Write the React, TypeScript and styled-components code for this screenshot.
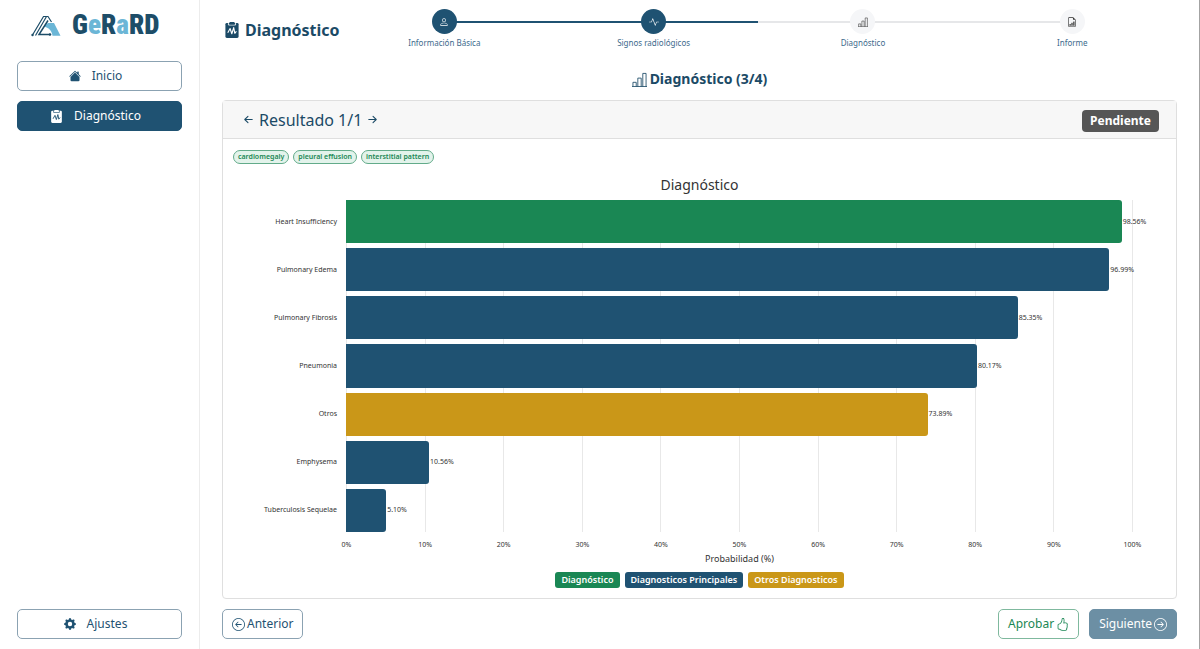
import React from "react";
import styled, { createGlobalStyle } from "styled-components";
import {
  BsActivity,
  BsArrowLeftCircle,
  BsArrowLeftShort,
  BsArrowRightCircle,
  BsArrowRightShort,
  BsFileEarmarkBarGraph,
  BsGearFill,
  BsHandThumbsUp,
  BsHouseFill,
  BsPerson,
} from "react-icons/bs";

const navy = "#1f5272";
const ink = "#1b4a66";
const green = "#1a8754";
const amber = "#ca9718";

const GlobalStyle = createGlobalStyle`
  *, *::before, *::after { box-sizing: border-box; }
  body {
    margin: 0;
    background: #fff;
    color: ${ink};
    font-family: "Noto Sans", "Open Sans", sans-serif;
    font-size: 12px;
    line-height: 16px;
  }
  h1, h2, h3, p, ul, ol { margin: 0; padding: 0; }
  ul, ol { list-style: none; }
  button { font: inherit; cursor: pointer; }
  svg { flex: none; }
`;

const Page = styled.div`
  display: flex;
  min-height: 100vh;
  border-right: 1px solid #a3a3a3;
`;

const Sidebar = styled.aside`
  display: flex;
  flex-direction: column;
  flex: 0 0 200px;
  padding: 10px 17px;
  border-right: 1px solid #ececec;
`;

const Logo = styled.a`
  display: flex;
  align-items: center;
  gap: 11px;
  height: 30px;
  margin: 0 0 21px 14px;
  color: #1d4d68;
  text-decoration: none;
`;

const Wordmark = styled.span`
  font-family: "Roboto Condensed", Roboto, sans-serif;
  font-size: 27px;
  line-height: 30px;
  font-weight: 900;
`;

const LightLetter = styled.span`
  color: #6bb6d6;
`;

const Nav = styled.nav`
  display: flex;
  flex-direction: column;
  flex: 1;
  gap: 10px;
`;

const NavButton = styled.button<{ $active?: boolean; $last?: boolean }>`
  display: flex;
  align-items: center;
  justify-content: center;
  gap: 11px;
  height: 30px;
  padding: 0 14px 0 6px;
  margin-top: ${(p) => (p.$last ? "auto" : "0")};
  border: 1px solid ${(p) => (p.$active ? navy : "#8ba2b2")};
  border-radius: 5px;
  background: ${(p) => (p.$active ? navy : "#fff")};
  color: ${(p) => (p.$active ? "#fff" : navy)};
`;

const Main = styled.main`
  display: flex;
  flex-direction: column;
  flex: 1;
  min-width: 0;
  padding: 9px 22px 10px;
`;

const Header = styled.header`
  display: flex;
  align-items: flex-start;
`;

const PageTitle = styled.h1`
  display: flex;
  align-items: center;
  gap: 5px;
  flex: 0 0 117px;
  margin-top: 9px;
  padding-left: 2px;
  font-size: 16px;
  line-height: 24px;
  font-weight: 700;
`;

const Stepper = styled.div`
  display: grid;
  flex: 1;
`;

const Track = styled.div`
  grid-area: 1 / 1;
  height: 2px;
  margin: 12px 12.5% 0;
  background: #e6e7e9;
`;

const TrackFill = styled.div`
  height: 2px;
  background: ${navy};
`;

const Steps = styled.ol`
  grid-area: 1 / 1;
  display: grid;
  grid-template-columns: repeat(4, 1fr);
`;

const Step = styled.li`
  display: flex;
  flex-direction: column;
  align-items: center;
  gap: 2px;
  font-size: 8px;
  line-height: 14px;
  color: #3c6a8c;
`;

const StepDot = styled.span<{ $done: boolean }>`
  display: flex;
  align-items: center;
  justify-content: center;
  width: 25px;
  height: 25px;
  border-radius: 50%;
  background: ${(p) => (p.$done ? navy : "#f5f6f8")};
  color: ${(p) => (p.$done ? "#fff" : "#333")};
`;

const Subtitle = styled.h2`
  display: flex;
  align-items: center;
  justify-content: center;
  gap: 3px;
  margin: 17px 0 9px;
  font-size: 14px;
  line-height: 24px;
  font-weight: 700;
`;

const Card = styled.section`
  display: flex;
  flex-direction: column;
  flex: 1;
  border: 1px solid #dfdfdf;
  border-radius: 4px;
`;

const CardHeader = styled.div`
  display: flex;
  align-items: center;
  justify-content: space-between;
  padding: 6px 17px;
  border-bottom: 1px solid #dfdfdf;
  background: #f7f7f7;
`;

const Pager = styled.div`
  display: flex;
  align-items: center;
  gap: 2px;
`;

const PagerTitle = styled.h3`
  font-size: 16px;
  line-height: 24px;
  font-weight: 400;
`;

const PagerButton = styled.button`
  display: flex;
  padding: 0;
  border: 0;
  background: none;
  color: inherit;
`;

const Status = styled.span`
  margin-top: 3px;
  padding: 2px 8px;
  border-radius: 4px;
  background: #565656;
  color: #fff;
  font-size: 12px;
  line-height: 18px;
  font-weight: 700;
`;

const Chips = styled.ul`
  display: flex;
  gap: 4px;
  padding: 11px 10px 0;
`;

const Chip = styled.li`
  padding: 0 4px;
  border: 1px solid #62ab8a;
  border-radius: 7px;
  background: #e3f3eb;
  color: ${green};
  font-size: 7px;
  line-height: 12px;
  font-weight: 600;
`;

const Chart = styled.figure`
  display: grid;
  grid-template-columns: 123px 1fr 43px;
  grid-template-rows: auto minmax(280px, 1fr) auto auto;
  flex: 1;
  margin: 11px 0 0;
  color: #333;
`;

const ChartTitle = styled.figcaption`
  grid-area: 1 / 1 / 2 / 4;
  padding-bottom: 5px;
  text-align: center;
  font-size: 14px;
  line-height: 20px;
`;

const RowLabels = styled.div`
  grid-area: 2 / 1;
  display: flex;
  flex-direction: column;
  gap: 5px;
  padding-right: 9px;
`;

const RowLabel = styled.div`
  display: flex;
  align-items: center;
  justify-content: flex-end;
  flex: 1;
  font-size: 7px;
  line-height: 10px;
`;

const GridLines = styled.div`
  grid-area: 2 / 2;
  display: flex;
  justify-content: space-between;
`;

const GridLine = styled.div`
  width: 1px;
  background: #e8e8e8;
`;

const Bars = styled.div`
  grid-area: 2 / 2;
  display: flex;
  flex-direction: column;
  gap: 5px;
  z-index: 1;
`;

const BarRow = styled.div`
  display: flex;
  align-items: center;
  gap: 1px;
  flex: 1;
  font-size: 7px;
  line-height: 10px;
`;

const Bar = styled.div<{ $color: string }>`
  flex: none;
  height: 100%;
  border-radius: 0 3px 3px 0;
  background: ${(p) => p.$color};
`;

const Ticks = styled.div`
  grid-area: 3 / 2;
  display: flex;
  justify-content: space-between;
  padding-top: 8px;
  font-size: 7px;
  line-height: 10px;
`;

const Tick = styled.span`
  display: flex;
  justify-content: center;
  width: 1px;
  white-space: nowrap;
`;

const AxisTitle = styled.div`
  grid-area: 4 / 2;
  padding-top: 2px;
  text-align: center;
  font-size: 9px;
  line-height: 14px;
`;

const Legend = styled.ul`
  display: flex;
  justify-content: center;
  gap: 5px;
  padding: 6px 0 10px;
`;

const LegendItem = styled.li<{ $color: string }>`
  padding: 1px 6px;
  border-radius: 3px;
  background: ${(p) => p.$color};
  color: #fff;
  font-size: 9px;
  line-height: 14px;
  font-weight: 600;
`;

const Footer = styled.footer`
  display: flex;
  gap: 10px;
  margin-top: 10px;
`;

const ActionButton = styled.button<{ $tone: string; $edge: string; $fill?: string; $push?: boolean }>`
  display: flex;
  align-items: center;
  gap: 2px;
  height: 30px;
  padding: 0 9px;
  margin-left: ${(p) => (p.$push ? "auto" : "0")};
  border: 1px solid ${(p) => p.$edge};
  border-radius: 5px;
  background: ${(p) => p.$fill ?? "#fff"};
  color: ${(p) => p.$tone};
`;

type IconProps = { size: number };

function LogoMark() {
  return (
    <svg width="30" height="24" viewBox="0 0 30 24" fill="none" aria-hidden="true">
      <path d="M12.500 13.500 17 10h6l6.500 12.800h-8C21 18 18 14.500 12.500 13.500Z" fill="#6bb6d6" />
      <path d="M1.500 22 12.500 3.500h2.500" stroke="#1d4d68" strokeWidth="1.200" />
      <path d="M4.500 22.500 15.500 3.500h1.500l3.500 5.500" stroke="#1d4d68" strokeWidth="1.200" />
      <path d="M17 7.500 8 21.500h11" stroke="#1d4d68" strokeWidth="1.500" />
      <circle cx="1.500" cy="22" r="1.200" fill="#1d4d68" />
      <circle cx="19" cy="21.500" r="1.300" fill="#1d4d68" />
    </svg>
  );
}

function ClipboardPulse({ size, line }: IconProps & { line: string }) {
  return (
    <svg width={size} height={size} viewBox="0 0 17 17" aria-hidden="true">
      <rect x="1.500" y="1" width="14" height="16" rx="1.500" fill="currentColor" />
      <path d="M4.700 1v2.200h7.600V1" fill="none" stroke={line} strokeWidth="0.900" />
      <rect x="5.700" width="5.600" height="2.600" rx="0.800" fill="currentColor" />
      <path
        d="M4 11.500 6.500 7l1.800 5.500L10.300 6l1.200 6 1.700-2.200"
        fill="none"
        stroke={line}
        strokeWidth="1.200"
        strokeLinejoin="round"
      />
    </svg>
  );
}

function BarSteps({ size }: IconProps) {
  return (
    <svg width={size} height={size} viewBox="0 0 16 16" fill="none" stroke="currentColor" strokeWidth="0.900" aria-hidden="true">
      <path d="M0 15.500h16M1 15.500v-4.500h3.500v4.500M6.200 15.500v-9h3.600v9M11.500 15.500v-14H15v14" />
    </svg>
  );
}

const steps = [
  { label: "Información Básica", icon: BsPerson, done: true },
  { label: "Signos radiológicos", icon: BsActivity, done: true },
  { label: "Diagnóstico", icon: BarSteps, done: false },
  { label: "Informe", icon: BsFileEarmarkBarGraph, done: false },
];

const results = [
  { name: "Heart Insufficiency", value: 98.56, color: green },
  { name: "Pulmonary Edema", value: 96.99, color: navy },
  { name: "Pulmonary Fibrosis", value: 85.35, color: navy },
  { name: "Pneumonia", value: 80.17, color: navy },
  { name: "Otros", value: 73.89, color: amber },
  { name: "Emphysema", value: 10.56, color: navy },
  { name: "Tuberculosis Sequelae", value: 5.1, color: navy },
];

const ticks = [0, 10, 20, 30, 40, 50, 60, 70, 80, 90, 100];

export default function App() {
  return (
    <>
      <GlobalStyle />
      <Page>
        <Sidebar>
          <Logo href="#">
            <LogoMark />
            <Wordmark>
              G<LightLetter>e</LightLetter>R<LightLetter>a</LightLetter>RD
            </Wordmark>
          </Logo>
          <Nav>
            <NavButton>
              <BsHouseFill size={12} /> Inicio
            </NavButton>
            <NavButton $active>
              <ClipboardPulse size={13} line={navy} /> Diagnóstico
            </NavButton>
            <NavButton $last>
              <BsGearFill size={12} /> Ajustes
            </NavButton>
          </Nav>
        </Sidebar>
        <Main>
          <Header>
            <PageTitle>
              <ClipboardPulse size={16} line="#fff" /> Diagnóstico
            </PageTitle>
            <Stepper>
              <Track>
                <TrackFill style={{ width: "50%" }} />
              </Track>
              <Steps>
                {steps.map(({ label, icon: Icon, done }) => (
                  <Step key={label}>
                    <StepDot $done={done}>
                      <Icon size={10} />
                    </StepDot>
                    {label}
                  </Step>
                ))}
              </Steps>
            </Stepper>
          </Header>
          <Subtitle>
            <BarSteps size={15} /> Diagnóstico (3/4)
          </Subtitle>
          <Card>
            <CardHeader>
              <Pager>
                <PagerButton aria-label="Resultado anterior">
                  <BsArrowLeftShort size={17} />
                </PagerButton>
                <PagerTitle>Resultado 1/1</PagerTitle>
                <PagerButton aria-label="Resultado siguiente">
                  <BsArrowRightShort size={17} />
                </PagerButton>
              </Pager>
              <Status>Pendiente</Status>
            </CardHeader>
            <Chips>
              <Chip>cardiomegaly</Chip>
              <Chip>pleural effusion</Chip>
              <Chip>interstitial pattern</Chip>
            </Chips>
            <Chart>
              <ChartTitle>Diagnóstico</ChartTitle>
              <RowLabels>
                {results.map((r) => (
                  <RowLabel key={r.name}>{r.name}</RowLabel>
                ))}
              </RowLabels>
              <GridLines>
                {ticks.map((t) => (
                  <GridLine key={t} />
                ))}
              </GridLines>
              <Bars>
                {results.map((r) => (
                  <BarRow key={r.name}>
                    <Bar $color={r.color} style={{ width: `${r.value}%` }} />
                    {`${r.value.toFixed(2)}%`}
                  </BarRow>
                ))}
              </Bars>
              <Ticks>
                {ticks.map((t) => (
                  <Tick key={t}>{`${t}%`}</Tick>
                ))}
              </Ticks>
              <AxisTitle>Probabilidad (%)</AxisTitle>
            </Chart>
            <Legend>
              <LegendItem $color={green}>Diagnóstico</LegendItem>
              <LegendItem $color={navy}>Diagnosticos Principales</LegendItem>
              <LegendItem $color={amber}>Otros Diagnosticos</LegendItem>
            </Legend>
          </Card>
          <Footer>
            <ActionButton $tone={navy} $edge="#8ba2b2">
              <BsArrowLeftCircle size={13} /> Anterior
            </ActionButton>
            <ActionButton $tone={green} $edge="#7fb99e" $push>
              Aprobar <BsHandThumbsUp size={13} />
            </ActionButton>
            <ActionButton $tone="#fff" $edge="#6c8fa4" $fill="#6c8fa4">
              Siguiente <BsArrowRightCircle size={13} />
            </ActionButton>
          </Footer>
        </Main>
      </Page>
    </>
  );
}
